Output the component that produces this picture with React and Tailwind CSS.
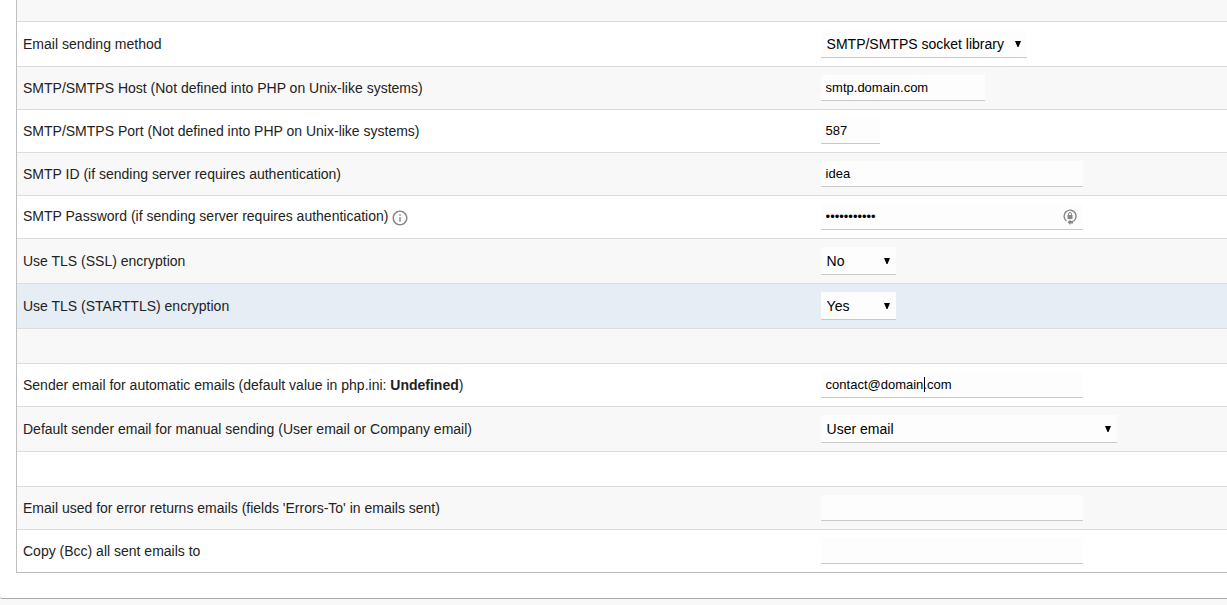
import React, { useState } from 'react';
import { MdInfoOutline } from 'react-icons/md';

const inputClass =
  'block h-[26px] px-[5px] border-b border-[#c8c8c8] bg-[#fdfdfd] text-[13px] text-black outline-none';

const Row = ({ id, label, className = '', last, children }) => (
  <tr className={className}>
    <td className={`w-[66%] pl-[6px] pr-1 py-2 border-b ${last ? 'border-[#bbbbbb]' : 'border-[#dcdcdc]'}`}>
      <label htmlFor={id} className="block">{label}</label>
    </td>
    <td className={`px-[5px] py-2 border-b ${last ? 'border-[#bbbbbb]' : 'border-[#dcdcdc]'}`}>
      {children}
    </td>
  </tr>
);

const EmptyRow = ({ className }) => (
  <tr className={className}>
    <td colSpan={2} className="border-b border-[#dcdcdc]"></td>
  </tr>
);

const Select = ({ id, value, options, onChange, className }) => (
  <div className={`relative ${className}`}>
    <select
      id={id}
      value={value}
      onChange={onChange}
      className="block h-7 w-full appearance-none pl-[6px] pr-4 border-b border-[#c8c8c8] bg-[#fdfdfd] text-sm text-black outline-none"
    >
      {options.map(option => (
        <option key={option} value={option}>{option}</option>
      ))}
    </select>
    <svg viewBox="0 0 6 6" className="pointer-events-none absolute right-[6px] top-[11px] h-[6px] w-[6px]">
      <path d="M0 0h6L3.500 6h-1z" fill="#000" />
    </svg>
  </div>
);

const PasswordManagerIcon = () => (
  <svg viewBox="0 0 16 18" className="pointer-events-none absolute right-[5px] top-[4px] h-[18px] w-4" fill="none">
    <path d="M4.500 13A6 6 0 1 1 9.500 14" stroke="#888" strokeWidth="1.400" />
    <path d="M6.500 7.500V6a1.500 1.500 0 0 1 3 0v1.500" stroke="#888" strokeWidth="1" />
    <path d="M5.500 7h5v4h-5z" fill="#888" />
    <path d="M8.500 11.500v1.500H11v2.500H8.500V17L5.500 14.200z" fill="#888" />
  </svg>
);

export default function App() {
  const [settings, setSettings] = useState({
    method: 'SMTP/SMTPS socket library',
    host: 'smtp.domain.com',
    port: '587',
    smtpId: 'idea',
    password: 'password123',
    tls: 'No',
    starttls: 'Yes',
    sender: 'contact@domain.com',
    manualSender: 'User email',
    errorsTo: '',
    bcc: ''
  });

  const handleChange = (e) => {
    const { id, value } = e.target;
    setSettings(prev => ({ ...prev, [id]: value }));
  };

  return (
    <div className="min-h-screen bg-[#f8f8f8] font-['Liberation_Sans',Arial,sans-serif] text-sm leading-[18px] text-[#222222]">
      <div className="overflow-hidden rounded-bl-[2px] border-b border-[#aaaaaa] bg-white pb-[25px] pl-4">
        <table className="w-full border-separate border-spacing-0 border-l border-[#c0c0c0]">
          <tbody>
            <EmptyRow className="h-[22px] bg-[#f8f8f8]" />
            <Row id="method" label="Email sending method">
              <Select
                id="method"
                value={settings.method}
                options={['PHP mail function', 'SMTP/SMTPS socket library']}
                onChange={handleChange}
                className="w-[206px]"
              />
            </Row>
            <Row id="host" label="SMTP/SMTPS Host (Not defined into PHP on Unix-like systems)" className="bg-[#f8f8f8]">
              <input id="host" type="text" value={settings.host} onChange={handleChange} className={`${inputClass} w-[164px]`} />
            </Row>
            <Row id="port" label="SMTP/SMTPS Port (Not defined into PHP on Unix-like systems)">
              <input id="port" type="text" value={settings.port} onChange={handleChange} className={`${inputClass} w-[59px]`} />
            </Row>
            <Row id="smtpId" label="SMTP ID (if sending server requires authentication)" className="bg-[#f8f8f8]">
              <input id="smtpId" type="text" value={settings.smtpId} onChange={handleChange} className={`${inputClass} w-[262px]`} />
            </Row>
            <Row
              id="password"
              label={
                <>
                  SMTP Password (if sending server requires authentication)
                  <MdInfoOutline className="ml-[3px] inline h-[18px] w-[18px] text-[#888888]" />
                </>
              }
            >
              <div className="relative w-[262px]">
                <input id="password" type="password" value={settings.password} onChange={handleChange} className={`${inputClass} w-full`} />
                <PasswordManagerIcon />
              </div>
            </Row>
            <Row id="tls" label="Use TLS (SSL) encryption" className="bg-[#f8f8f8]">
              <Select id="tls" value={settings.tls} options={['No', 'Yes']} onChange={handleChange} className="w-[75px]" />
            </Row>
            <Row id="starttls" label="Use TLS (STARTTLS) encryption" className="bg-[#e6edf5]">
              <Select id="starttls" value={settings.starttls} options={['No', 'Yes']} onChange={handleChange} className="w-[75px]" />
            </Row>
            <EmptyRow className="h-[35px] bg-[#f8f8f8]" />
            <Row
              id="sender"
              label={<>Sender email for automatic emails (default value in php.ini: <b>Undefined</b>)</>}
            >
              <div className="relative w-[262px]">
                <input id="sender" type="text" value={settings.sender} onChange={handleChange} className={`${inputClass} w-full`} />
                {/* text caret */}
                <span className="pointer-events-none absolute left-[103px] top-[5px] h-[15px] w-px bg-black"></span>
              </div>
            </Row>
            <Row
              id="manualSender"
              label="Default sender email for manual sending (User email or Company email)"
              className="bg-[#f8f8f8]"
            >
              <Select
                id="manualSender"
                value={settings.manualSender}
                options={['User email', 'Company email']}
                onChange={handleChange}
                className="w-[296px]"
              />
            </Row>
            <EmptyRow className="h-[35px]" />
            <Row
              id="errorsTo"
              label="Email used for error returns emails (fields 'Errors-To' in emails sent)"
              className="bg-[#f8f8f8]"
            >
              <input id="errorsTo" type="text" value={settings.errorsTo} onChange={handleChange} className={`${inputClass} w-[262px]`} />
            </Row>
            <Row id="bcc" label="Copy (Bcc) all sent emails to" last>
              <input id="bcc" type="text" value={settings.bcc} onChange={handleChange} className={`${inputClass} w-[262px]`} />
            </Row>
          </tbody>
        </table>
      </div>
    </div>
  );
}
